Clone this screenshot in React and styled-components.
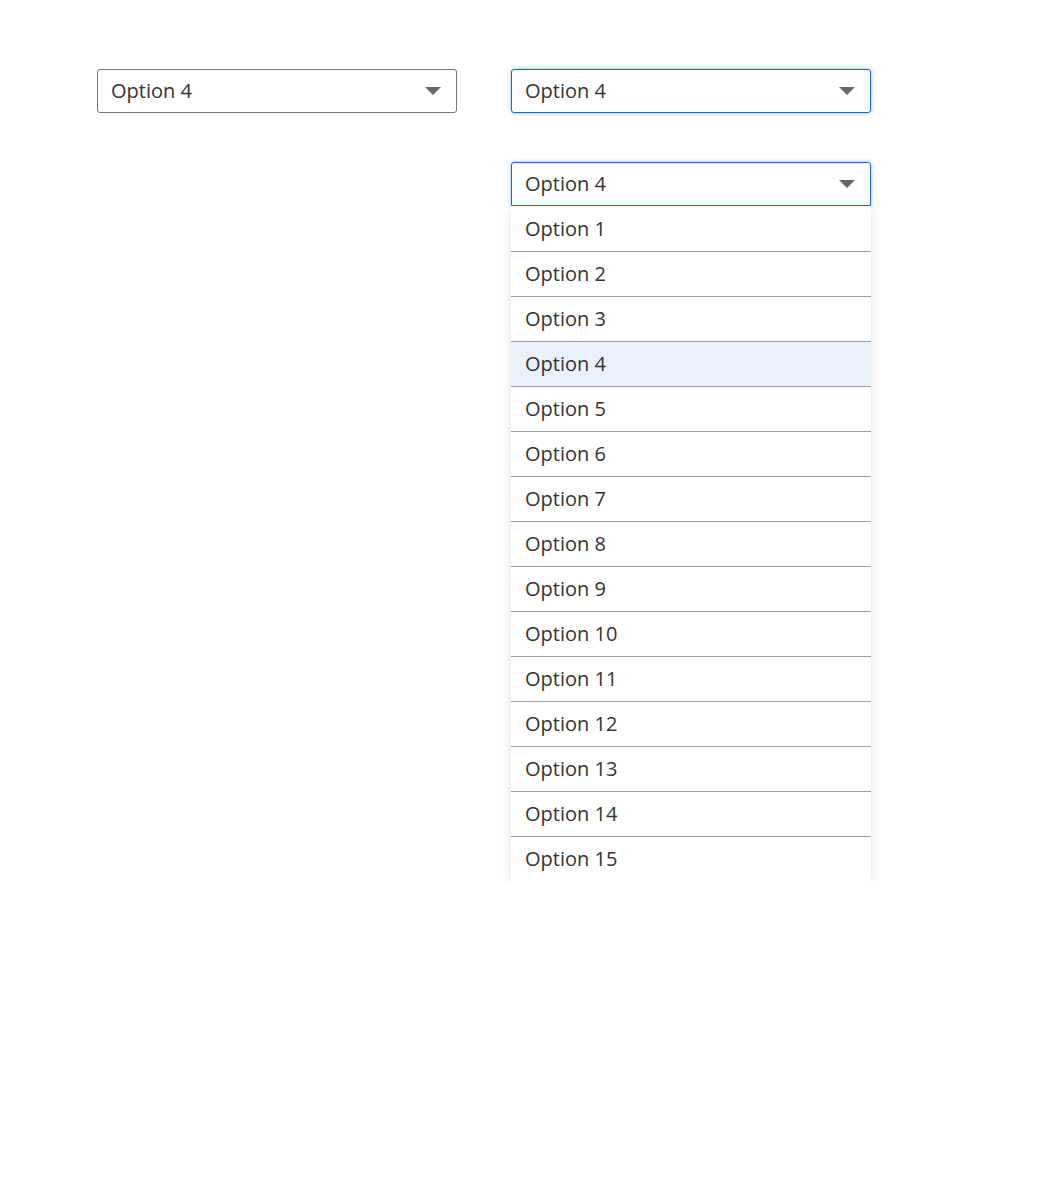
import React from "react";
import styled, { createGlobalStyle, css } from "styled-components";

const GlobalStyle = createGlobalStyle`
	body {
		margin: 0;
		background: #ffffff;
		font-family: "Open Sans", "Noto Sans", sans-serif;
		color: #333333;
	}
`;

const Page = styled.div`
	display: grid;
	grid-template-columns: 360px 360px;
	column-gap: 54px;
	row-gap: 49px;
	padding: 69px 0 0 97px;
	align-items: start;
`;

const Field = styled.div`
	position: relative;
	width: 360px;
`;

const Trigger = styled.div`
	box-sizing: border-box;
	display: flex;
	align-items: center;
	justify-content: space-between;
	height: 44px;
	padding: 0 15px 2px 13px;
	border: 1px solid #767676;
	border-radius: 3px;
	background: #fff;
	font-size: 20px;
	color: #333;
	${({ focused }) =>
		focused &&
		css`
			border-color: #1a66d9;
			box-shadow: 0 0 4px rgba(26, 102, 217, 0.45);
		`}
	${({ open }) =>
		open &&
		css`
			border-bottom-left-radius: 0;
			border-bottom-right-radius: 0;
		`}
`;

const Caret = styled.span`
	width: 0;
	height: 0;
	border-left: 8px solid transparent;
	border-right: 8px solid transparent;
	border-top: 8px solid #666;
	margin-top: 2px;
`;

const Menu = styled.ul`
	list-style: none;
	margin: 0;
	padding: 1px 0 0;
	background: #fff;
	box-shadow: 0 4px 10px rgba(0, 0, 0, 0.12);
`;

const Item = styled.li`
	box-sizing: border-box;
	display: flex;
	align-items: center;
	height: 45px;
	padding: 0 14px 2px;
	font-size: 20px;
	color: #333;
	border-bottom: 1px solid #9e9e9e;
	background: ${({ active }) => (active ? "#eaf1fb" : "#fff")};
	&:last-child {
		border-bottom: none;
		height: 44px;
	}
`;

const Spacer = styled.div``;

const options = Array.from({ length: 15 }, (_, i) => `Option ${i + 1}`);

const Select = ({ focused, open }) => (
	<Field>
		<Trigger focused={focused} open={open}>
			<span>Option 4</span>
			<Caret />
		</Trigger>
		{open && (
			<Menu>
				{options.map((o) => (
					<Item key={o} active={o === "Option 4"}>
						{o}
					</Item>
				))}
			</Menu>
		)}
	</Field>
);

const App = () => (
	<>
		<GlobalStyle />
		<Page>
			<Select />
			<Select focused />
			<Spacer />
			<Select focused open />
		</Page>
	</>
);

export default App;
